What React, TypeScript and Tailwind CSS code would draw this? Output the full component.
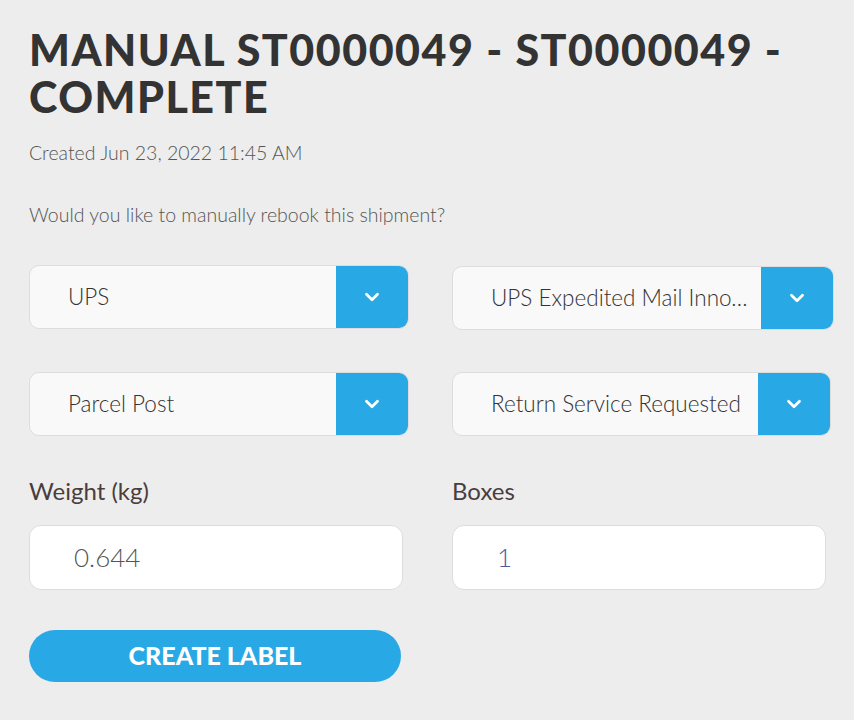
import { ChevronDown } from "lucide-react";

const sans = { fontFamily: "Lato, 'Open Sans', sans-serif" };

function Select({ value, className }: { value: string; className: string }) {
  return (
    <div className={`flex h-16 items-stretch overflow-hidden rounded-[10px] border border-[#dddddd] bg-[#f9f9f9] ${className}`}>
      <div className="flex min-w-0 flex-1 items-center pl-[38px] pr-[10px] text-[22.5px] font-light text-[#333333]">
        <span className="truncate">{value}</span>
      </div>
      <div className="flex w-[72px] shrink-0 items-center justify-center bg-[#29a8e6]">
        <ChevronDown size={22} strokeWidth={3} className="text-white" />
      </div>
    </div>
  );
}

function Field({ label, value, valueClass }: { label: string; value: string; valueClass: string }) {
  return (
    <div className="flex flex-col">
      <label className="text-[24px] leading-[30px] text-[#4a3d3d]">{label}</label>
      <div className="mt-[19px] flex h-[65px] w-[374px] items-center rounded-[12px] border border-[#dddddd] bg-white pl-[44px]">
        <span className={`text-[26px] font-light ${valueClass}`}>{value}</span>
      </div>
    </div>
  );
}

export default function App() {
  return (
    <div className="min-h-screen bg-[#ededed] px-[29px] pt-[26px]" style={sans}>
      <h1 className="text-[43px] font-black uppercase leading-[47px] tracking-[1.5px] text-[#333333]">
        Manual ST0000049 - ST0000049 - Complete
      </h1>
      <p className="mt-[21px] text-[19.5px] font-light leading-[24px] text-[#555555]">Created Jun 23, 2022 11:45 AM</p>
      <p className="mt-[38px] text-[19.5px] font-light leading-[24px] text-[#555555]">Would you like to manually rebook this shipment?</p>

      <div className="mt-[38px] grid grid-cols-[380px_382px] gap-x-[43px] gap-y-[42px]">
        <Select value="UPS" className="" />
        <Select value="UPS Expedited Mail Innovations" className="mt-px" />
        <Select value="Parcel Post" className="" />
        <Select value="Return Service Requested" className="w-[379px]" />
      </div>

      <div className="mt-[40px] grid grid-cols-[380px_382px] gap-x-[43px]">
        <Field label="Weight (kg)" value="0.644" valueClass="text-[#555555]" />
        <Field label="Boxes" value="1" valueClass="text-[#4a5aa0]" />
      </div>

      <button className="mt-[40px] flex h-[52px] w-[372px] items-center justify-center rounded-full bg-[#29a8e6] text-[25px] font-black uppercase text-white">
        Create Label
      </button>
    </div>
  );
}
